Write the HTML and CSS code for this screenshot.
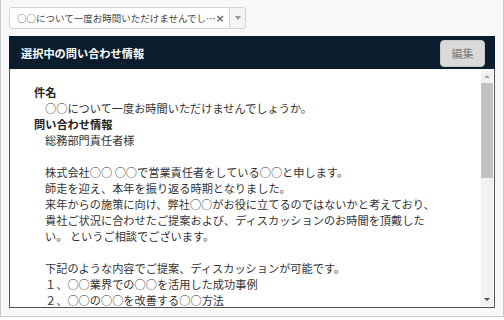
FILE: index.html
```html
<!DOCTYPE html>
<html lang="ja">
<head>
  <meta charset="UTF-8" />
  <title>問い合わせ情報</title>
  <link rel="stylesheet" href="styles.css">
</head>
<body>
  <div class="frame">
    <div class="picker">
      <div class="picker-value">
        <span class="picker-text">○○について一度お時間いただけませんでし…</span>
        <span class="picker-clear">×</span>
      </div>
      <div class="picker-arrow"><span class="caret"></span></div>
    </div>

    <div class="panel">
      <div class="panel-head">
        <h2>選択中の問い合わせ情報</h2>
        <button class="edit-btn">編集</button>
      </div>
      <div class="panel-body">
        <div class="detail">
          <div class="label">件名</div>
          <div class="value">○○について一度お時間いただけませんでしょうか。</div>
          <div class="label">問い合わせ情報</div>
          <div class="value message">総務部門責任者様

株式会社○○ ○○で営業責任者をしている○○と申します。
師走を迎え、本年を振り返る時期となりました。
来年からの施策に向け、弊社○○がお役に立てるのではないかと考えており、
貴社ご状況に合わせたご提案および、ディスカッションのお時間を頂戴した
い。 というご相談でございます。

下記のような内容でご提案、ディスカッションが可能です。
１、○○業界での○○を活用した成功事例
２、○○の○○を改善する○○方法</div>
        </div>
        <div class="scrollbar">
          <span class="sb-up"></span>
          <div class="sb-track"><div class="sb-thumb"></div></div>
          <span class="sb-down"></span>
        </div>
      </div>
    </div>
  </div>
</body>
</html>
```

FILE: styles.css
```css
* { box-sizing: border-box; }
body { margin: 0; background: #fff; font-family: "Noto Sans CJK JP", "Noto Sans", sans-serif; color: #333; }

.frame { width: 504px; height: 317px; border: 1px solid #c9c9c9; border-top: none; background: #f8f8f8; padding: 7px 8px 0; }

.picker { display: flex; height: 22px; margin-bottom: 7px; }
.picker-value { width: 221px; display: flex; align-items: center; justify-content: space-between; padding: 0 6px 0 7px; background: #fff; border: 1px solid #d4d4d4; border-radius: 3px 0 0 3px; font-size: 9.5px; color: #444; overflow: hidden; }
.picker-text { white-space: nowrap; }
.picker-clear { font-family: "DejaVu Sans", sans-serif; font-size: 11px; font-weight: bold; color: #666; }
.picker-arrow { width: 16px; display: flex; align-items: center; justify-content: center; background: #f4f4f4; border: 1px solid #d4d4d4; border-left: none; border-radius: 0 3px 3px 0; }
.caret { border-left: 3px solid transparent; border-right: 3px solid transparent; border-top: 4px solid #999; }

.panel { width: 486px; }
.panel-head { height: 33px; display: flex; align-items: center; justify-content: space-between; padding: 0 10px 0 12px; background: #0b1d2c; }
.panel-head h2 { margin: 0; font-size: 11.2px; font-weight: bold; color: #fff; }
.edit-btn { width: 45px; height: 27px; margin-top: 1px; border: 1px solid #c8c8c8; border-radius: 4px; background: #d9d9d9; color: #7c7c7c; font-family: inherit; font-size: 11px; }

.panel-body { height: 239px; display: flex; background: #fff; border: 1px solid #555; border-top: none; overflow: hidden; }
.detail { flex: 1; padding: 15px 20px 0 24px; font-size: 11.2px; line-height: 16px; }
.label { font-weight: bold; color: #222; }
.value { padding-left: 11px; }
.message { white-space: pre; }

.scrollbar { width: 12px; margin: 1px 1px 1px 0; display: flex; flex-direction: column; background: #f1f1f1; }
.sb-track { flex: 1; }
.sb-thumb { height: 95px; background: #c1c1c1; }
.sb-up, .sb-down { height: 13px; display: flex; align-items: center; justify-content: center; }
.sb-up::before { content: ""; border-left: 3px solid transparent; border-right: 3px solid transparent; border-bottom: 3px solid #a3a3a3; }
.sb-down::before { content: ""; border-left: 3px solid transparent; border-right: 3px solid transparent; border-top: 3px solid #505050; }
```
